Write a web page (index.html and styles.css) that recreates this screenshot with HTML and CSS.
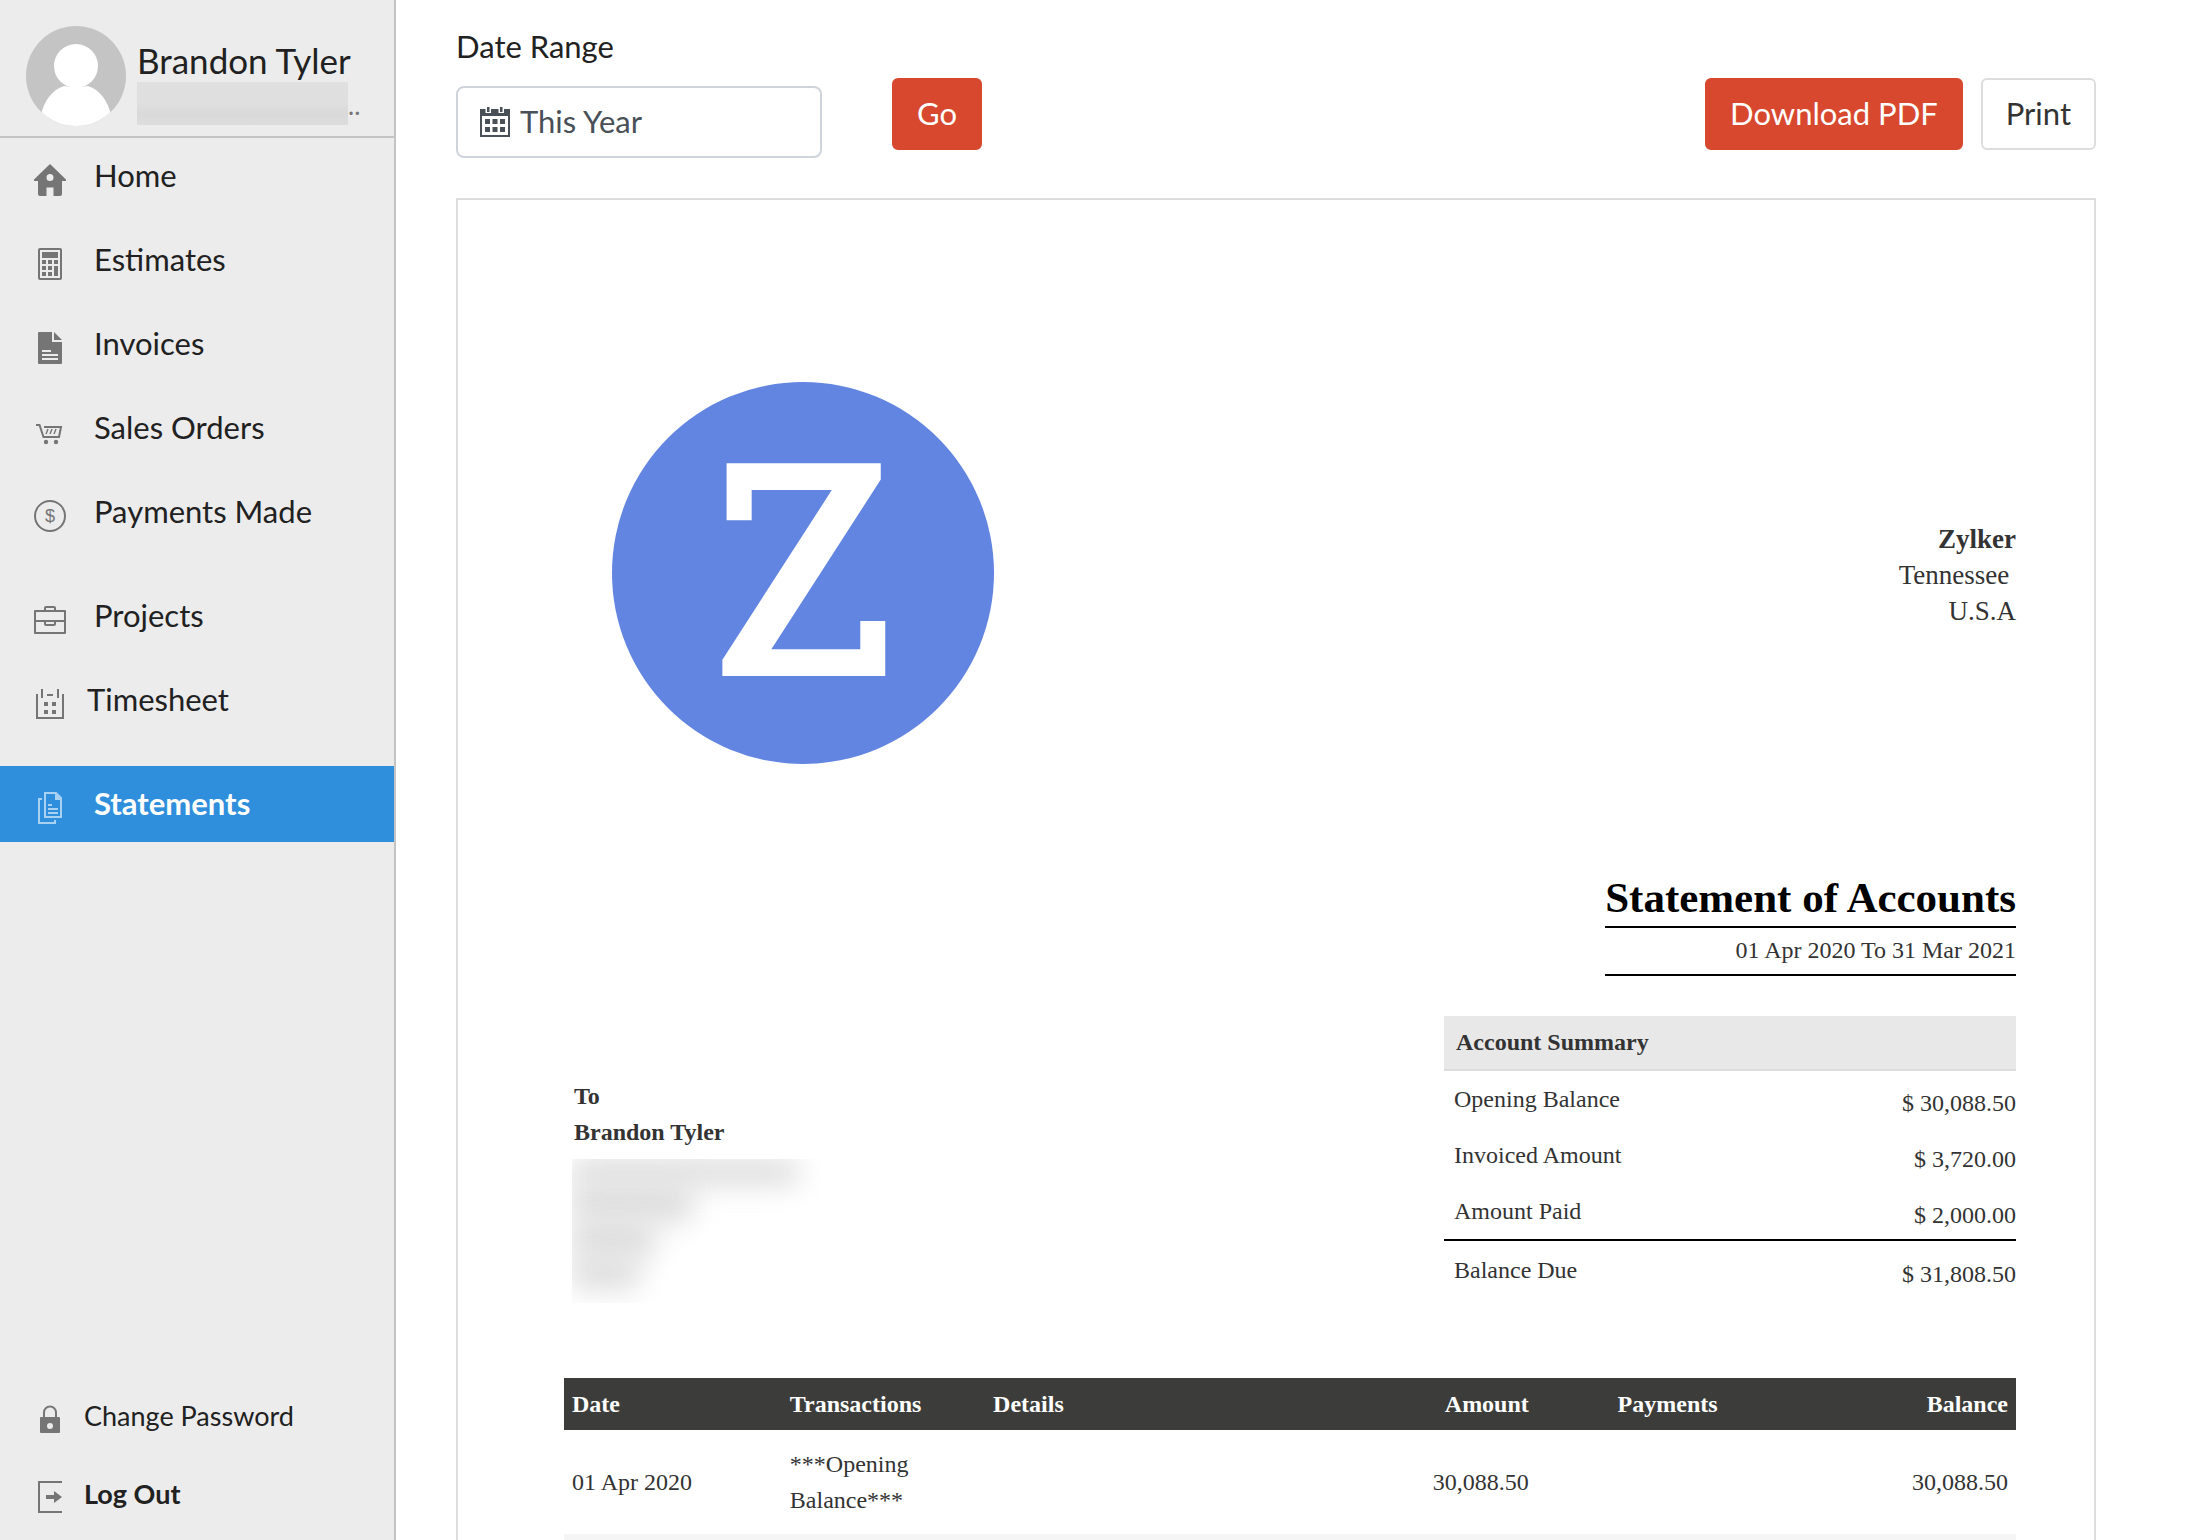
FILE: index.html
```html
<!DOCTYPE html>
<html lang="en">
<head>
    <meta charset="utf-8">
    <title>Statements</title>
    <link rel="stylesheet" href="styles.css">
</head>
<body>
    <div class="app">
        <aside class="sidebar">
            <div class="profile">
                <svg class="avatar" viewBox="0 0 100 100">
                    <defs><clipPath id="avatar-clip"><circle cx="50" cy="50" r="50"/></clipPath></defs>
                    <g clip-path="url(#avatar-clip)">
                        <rect width="100" height="100" fill="#c4c4c4"/>
                        <circle cx="50" cy="40" r="22" fill="#fff"/>
                        <path d="M38 60Q50 62 62 60C74 64 81 74 85 88L80 100H20L15 88C19 74 26 64 38 60Z" fill="#fff"/>
                    </g>
                </svg>
                <div class="profile-text">
                    <div class="profile-name">Brandon Tyler</div>
                    <div class="profile-mail"><span class="mail-hidden"></span>..</div>
                </div>
            </div>

            <nav class="nav">
                <a class="nav-item" href="#">
                    <svg class="icon" viewBox="0 0 32 32"><path fill="currentColor" fill-rule="evenodd" d="M16 0L32 15.500V17H28V30a2 2 0 0 1-2 2H19.500V23.500h-7V32H6a2 2 0 0 1-2-2V17H0V15.500ZM16 10a3.500 3.500 0 1 0 0 7a3.500 3.500 0 1 0 0-7Z"/></svg>
                    <span>Home</span>
                </a>
                <a class="nav-item" href="#">
                    <svg class="icon" viewBox="0 0 32 32">
                        <rect x="5" y="1" width="22" height="30" rx="1" fill="none" stroke="currentColor" stroke-width="2"/>
                        <path fill="currentColor" d="M8 4h16v6H8zM8 12h4v4H8zM14 12h4v4h-4zM20 12h4v4h-4zM8 18h4v4H8zM14 18h4v4h-4zM20 18h4v10h-4zM8 24h4v4H8zM14 24h4v4h-4z"/>
                    </svg>
                    <span>Estimates</span>
                </a>
                <a class="nav-item" href="#">
                    <svg class="icon" viewBox="0 0 32 32"><path fill="currentColor" fill-rule="evenodd" d="M5 0H18V10H28V31a1 1 0 0 1-1 1H5a1 1 0 0 1-1-1V1a1 1 0 0 1 1-1ZM20 0L28 8H20ZM8 18v2h9v-2ZM8 22v2h16v-2ZM8 26v2h16v-2Z"/></svg>
                    <span>Invoices</span>
                </a>
                <a class="nav-item" href="#">
                    <svg class="icon" viewBox="0 0 32 32">
                        <path fill="none" stroke="currentColor" stroke-width="2" d="M2 9H5.500L9.500 21H25L27 11H10"/>
                        <path fill="none" stroke="currentColor" stroke-width="1.400" d="M14 13L12 18M18 13L16 18M22 13L20 18"/>
                        <circle cx="12" cy="26" r="2.200" fill="currentColor"/><circle cx="22" cy="26" r="2.200" fill="currentColor"/>
                    </svg>
                    <span>Sales Orders</span>
                </a>
                <a class="nav-item" href="#">
                    <svg class="icon" viewBox="0 0 32 32">
                        <circle cx="16" cy="16" r="15" fill="none" stroke="currentColor" stroke-width="2"/>
                        <text class="icon-sign" x="16" y="22" text-anchor="middle">$</text>
                    </svg>
                    <span>Payments Made</span>
                </a>
                <a class="nav-item group-start" href="#">
                    <svg class="icon" viewBox="0 0 32 32"><path fill="none" stroke="currentColor" stroke-width="2" stroke-linejoin="round" d="M1 7H31V29H1ZM1 17H31M11 7V4q0-1 1-1h8q1 0 1 1V7M11 17v3q0 1 1 1h8q1 0 1-1V17"/></svg>
                    <span>Projects</span>
                </a>
                <a class="nav-item tight" href="#">
                    <svg class="icon" viewBox="0 0 32 32">
                        <path fill="none" stroke="currentColor" stroke-width="2" d="M3 6V30H29V6M8 1V10M24 1V10M13 7H19"/>
                        <path fill="currentColor" d="M10 14h4v4h-4zM18 14h4v4h-4zM10 22h4v4h-4zM18 22h4v4h-4z"/>
                    </svg>
                    <span>Timesheet</span>
                </a>
                <a class="nav-item group-start active" href="#">
                    <svg class="icon" viewBox="0 0 32 32">
                        <path fill="none" stroke="currentColor" stroke-width="2" d="M8 7H5V31H21V28M11 1H22L27 6V25H11ZM14 13H18M14 17H24M14 21H24"/>
                        <path fill="currentColor" d="M21 1L28 8H21Z"/>
                    </svg>
                    <span>Statements</span>
                </a>
            </nav>

            <div class="account">
                <a class="account-item" href="#">
                    <svg class="icon" viewBox="0 0 32 32">
                        <path fill="none" stroke="currentColor" stroke-width="2" d="M10 15V9.500a6 6 0 0 1 12 0V15"/>
                        <path fill="currentColor" fill-rule="evenodd" d="M7 14H25a1 1 0 0 1 1 1V29a1 1 0 0 1-1 1H7a1 1 0 0 1-1-1V15a1 1 0 0 1 1-1ZM16 20a3 3 0 1 0 0 6a3 3 0 1 0 0-6Z"/>
                    </svg>
                    <span>Change Password</span>
                </a>
                <a class="account-item strong" href="#">
                    <svg class="icon" viewBox="0 0 32 32">
                        <path fill="none" stroke="currentColor" stroke-width="2" d="M28 1H5V31H28"/>
                        <path fill="currentColor" d="M12 14H20V10L28 16L20 22V18H12Z"/>
                    </svg>
                    <span>Log Out</span>
                </a>
            </div>
        </aside>

        <main class="main">
            <div class="toolbar">
                <div class="field">
                    <label for="range">Date Range</label>
                    <div class="select-box">
                        <svg class="calendar" viewBox="0 0 30 30">
                            <path fill="currentColor" fill-rule="evenodd" d="M0 2H5.500V6H11V2H18.500V6H24V2H30V30H0ZM2 9V28H28V9Z"/>
                            <path fill="currentColor" d="M7 0h2.500v5H7zM20 0h2.500v5H20zM5 12h5v5H5zM12.500 12h5v5h-5zM20 12h5v5h-5zM5 20h5v5H5zM12.500 20h5v5h-5zM20 20h5v5h-5z"/>
                        </svg>
                        <select id="range">
                            <option>This Year</option>
                            <option>This Month</option>
                            <option>This Quarter</option>
                        </select>
                    </div>
                </div>
                <button class="btn btn-primary btn-go" type="button">Go</button>
                <div class="actions">
                    <button class="btn btn-primary" type="button">Download PDF</button>
                    <button class="btn" type="button">Print</button>
                </div>
            </div>

            <section class="statement">
                <div class="company">
                    <svg class="logo" viewBox="0 0 382 382">
                        <circle cx="191" cy="191" r="191" fill="#6285e1"/>
                        <text class="logo-letter" x="191" y="289" text-anchor="middle">Z</text>
                    </svg>
                    <div class="company-address">
                        <strong>Zylker</strong>
                        <div>Tennessee&nbsp;</div>
                        <div>U.S.A</div>
                    </div>
                </div>

                <div class="title">
                    <h1>Statement of Accounts</h1>
                    <p>01 Apr 2020 To 31 Mar 2021</p>
                </div>

                <div class="overview">
                    <div class="recipient">
                        <strong>To</strong>
                        <strong>Brandon Tyler</strong>
                        <div class="address-hidden">
                            <span class="line line-1"></span>
                            <span class="line line-2"></span>
                            <span class="line line-3"></span>
                            <span class="line line-4"></span>
                        </div>
                    </div>
                    <table class="summary">
                        <thead>
                            <tr><th colspan="2">Account Summary</th></tr>
                        </thead>
                        <tbody>
                            <tr><td>Opening Balance</td><td>$ 30,088.50</td></tr>
                            <tr><td>Invoiced Amount</td><td>$ 3,720.00</td></tr>
                            <tr><td>Amount Paid</td><td>$ 2,000.00</td></tr>
                        </tbody>
                        <tfoot>
                            <tr><td>Balance Due</td><td>$ 31,808.50</td></tr>
                        </tfoot>
                    </table>
                </div>

                <table class="transactions">
                    <colgroup>
                        <col class="col-date"><col class="col-type"><col class="col-details">
                        <col class="col-amount"><col class="col-payments"><col class="col-balance">
                    </colgroup>
                    <thead>
                        <tr>
                            <th>Date</th>
                            <th>Transactions</th>
                            <th>Details</th>
                            <th class="num">Amount</th>
                            <th class="num">Payments</th>
                            <th class="num">Balance</th>
                        </tr>
                    </thead>
                    <tbody>
                        <tr>
                            <td>01 Apr 2020</td>
                            <td>***Opening Balance***</td>
                            <td></td>
                            <td class="num">30,088.50</td>
                            <td></td>
                            <td class="num">30,088.50</td>
                        </tr>
                        <tr><td></td><td></td><td></td><td></td><td></td><td></td></tr>
                    </tbody>
                </table>
            </section>
        </main>
    </div>
</body>
</html>
```
FILE: styles.css
```css
* {
    box-sizing: border-box;
}

body {
    margin: 0;
    font-family: Lato, sans-serif;
    font-size: 31px;
    color: #212121;
    background-color: #fff;
}

.app {
    display: flex;
    height: 100vh;
    overflow: hidden;
}

/* sidebar */
.sidebar {
    display: flex;
    flex-direction: column;
    flex: 0 0 396px;
    background-color: #ececec;
    border-right: 2px solid #c4c4c4;
}

.profile {
    display: flex;
    gap: 11px;
    padding: 26px 24px 10px 26px;
    border-bottom: 2px solid #c4c4c4;
}

.avatar {
    flex: none;
    width: 100px;
    height: 100px;
}

.profile-text {
    padding-top: 12px;
}

.profile-name {
    font-size: 35px;
    line-height: 44px;
    white-space: nowrap;
}

.profile-mail {
    display: flex;
    align-items: flex-end;
    font-size: 26px;
    line-height: 40px;
    color: #757575;
}

.mail-hidden {
    width: 211px;
    height: 43px;
    background: linear-gradient(#e0e0e0, #dfdfdf 50%, #d9d9d9 75%, #dddddd);
}

.nav-item {
    display: flex;
    align-items: center;
    gap: 28px;
    height: 76px;
    margin-bottom: 8px;
    padding-left: 34px;
    color: #212121;
    text-decoration: none;
}

.nav-item span {
    padding-bottom: 2px;
}

.nav-item.group-start {
    margin-top: 28px;
}

.nav-item.tight {
    gap: 21px;
}

.icon {
    width: 32px;
    height: 32px;
    margin-top: 8px;
    color: #757575;
}

.icon-sign {
    font-family: "Liberation Sans", sans-serif;
    font-size: 18px;
    fill: #757575;
}

.nav-item.active {
    background-color: #2f8fdc;
    color: #fff;
    font-weight: bold;
}

.nav-item.active .icon {
    color: #a9d1f1;
}

.account {
    margin-top: auto;
    padding-bottom: 12px;
}

.account-item {
    display: flex;
    align-items: center;
    gap: 18px;
    height: 70px;
    margin-top: 8px;
    padding-left: 34px;
    font-size: 27px;
    color: #212121;
    text-decoration: none;
}

.account-item.strong {
    font-weight: bold;
}

/* content */
.main {
    flex: 1;
    min-width: 0;
    padding: 28px 112px 0 60px;
}

.toolbar {
    display: flex;
    align-items: flex-end;
    margin-bottom: 40px;
}

.field {
    flex: 0 0 366px;
}

.field label {
    display: block;
    margin-bottom: 22px;
    line-height: 36px;
}

.select-box {
    display: flex;
    align-items: center;
    gap: 10px;
    height: 72px;
    padding: 0 22px;
    border: 2px solid #ced4da;
    border-radius: 8px;
    color: #495057;
}

.calendar {
    flex: none;
    width: 30px;
    height: 30px;
}

.select-box select {
    flex: 1;
    appearance: none;
    border: none;
    padding: 0 0 2px;
    background: none;
    font: inherit;
    color: inherit;
}

.btn {
    height: 72px;
    margin-bottom: 8px;
    padding: 0 23px 2px;
    border: 2px solid #ddd;
    border-radius: 6px;
    background-color: #fff;
    font-family: inherit;
    font-size: 31px;
    color: #333;
}

.btn-primary {
    border-color: #d7482f;
    background-color: #d7482f;
    color: #fff;
}

.btn-go {
    margin-left: 70px;
}

.actions {
    display: flex;
    gap: 18px;
    margin-left: auto;
}

/* statement sheet */
.statement {
    padding: 182px 78px 80px 106px;
    border: 2px solid #ddd;
    font-family: "Liberation Serif", serif;
    font-size: 24px;
    line-height: 36px;
    color: #333;
}

.company {
    display: flex;
    align-items: center;
    justify-content: space-between;
    padding-left: 48px;
}

.logo {
    width: 382px;
    height: 382px;
}

.logo-letter {
    font-family: "DejaVu Serif Condensed", "DejaVu Serif", serif;
    font-size: 278px;
    fill: #fff;
    stroke: #fff;
    stroke-width: 10px;
}

.company-address {
    padding-top: 4px;
    font-size: 27px;
    text-align: right;
}

.title {
    width: fit-content;
    margin: 110px 0 40px auto;
    border-bottom: 2px solid #000;
    text-align: right;
}

.title h1 {
    margin: 0;
    padding-bottom: 4px;
    border-bottom: 2px solid #000;
    font-size: 43px;
    line-height: 48px;
    color: #000;
}

.title p {
    margin: 0;
    padding: 4px 0 6px;
}

.overview {
    display: flex;
    align-items: flex-end;
    justify-content: space-between;
    margin-bottom: 75px;
}

.recipient strong {
    display: block;
    padding-left: 10px;
}

/* address is kept unreadable */
.address-hidden {
    width: 248px;
    height: 144px;
    margin: 9px 0 0 8px;
    overflow: hidden;
}

.line {
    display: block;
    height: 36px;
    background-color: #dcdcdc;
    filter: blur(14px);
}

.line-1 {
    width: 226px;
    height: 26px;
}

.line-2 {
    width: 120px;
}

.line-3 {
    width: 82px;
}

.line-4 {
    width: 66px;
    height: 32px;
}

.summary {
    width: 572px;
    margin-bottom: 4px;
    border-collapse: collapse;
}

.summary th {
    height: 54px;
    padding: 0 12px 2px;
    border-bottom: 2px solid #dcdcdc;
    background-color: #e8e8e8;
    text-align: left;
}

.summary td {
    padding: 10px 0 10px 10px;
}

.summary td:last-child {
    padding: 14px 0 6px;
    text-align: right;
}

.summary tfoot td {
    height: 59px;
    border-top: 2px solid #000;
}

.transactions {
    width: 100%;
    table-layout: fixed;
    border-collapse: collapse;
}

.transactions th {
    height: 52px;
    padding: 0 8px;
    background-color: #3c3d3a;
    color: #fff;
    text-align: left;
}

.transactions td {
    height: 104px;
    padding: 8px;
}

.transactions .num {
    text-align: right;
}

.transactions tbody tr:nth-child(even) {
    background-color: #f5f5f5;
}

.col-date {
    width: 15%;
}

.col-type {
    width: 14%;
}

.col-details {
    width: 22%;
}

.col-amount {
    width: 16%;
}

.col-payments {
    width: 13%;
}

.col-balance {
    width: 20%;
}
```
